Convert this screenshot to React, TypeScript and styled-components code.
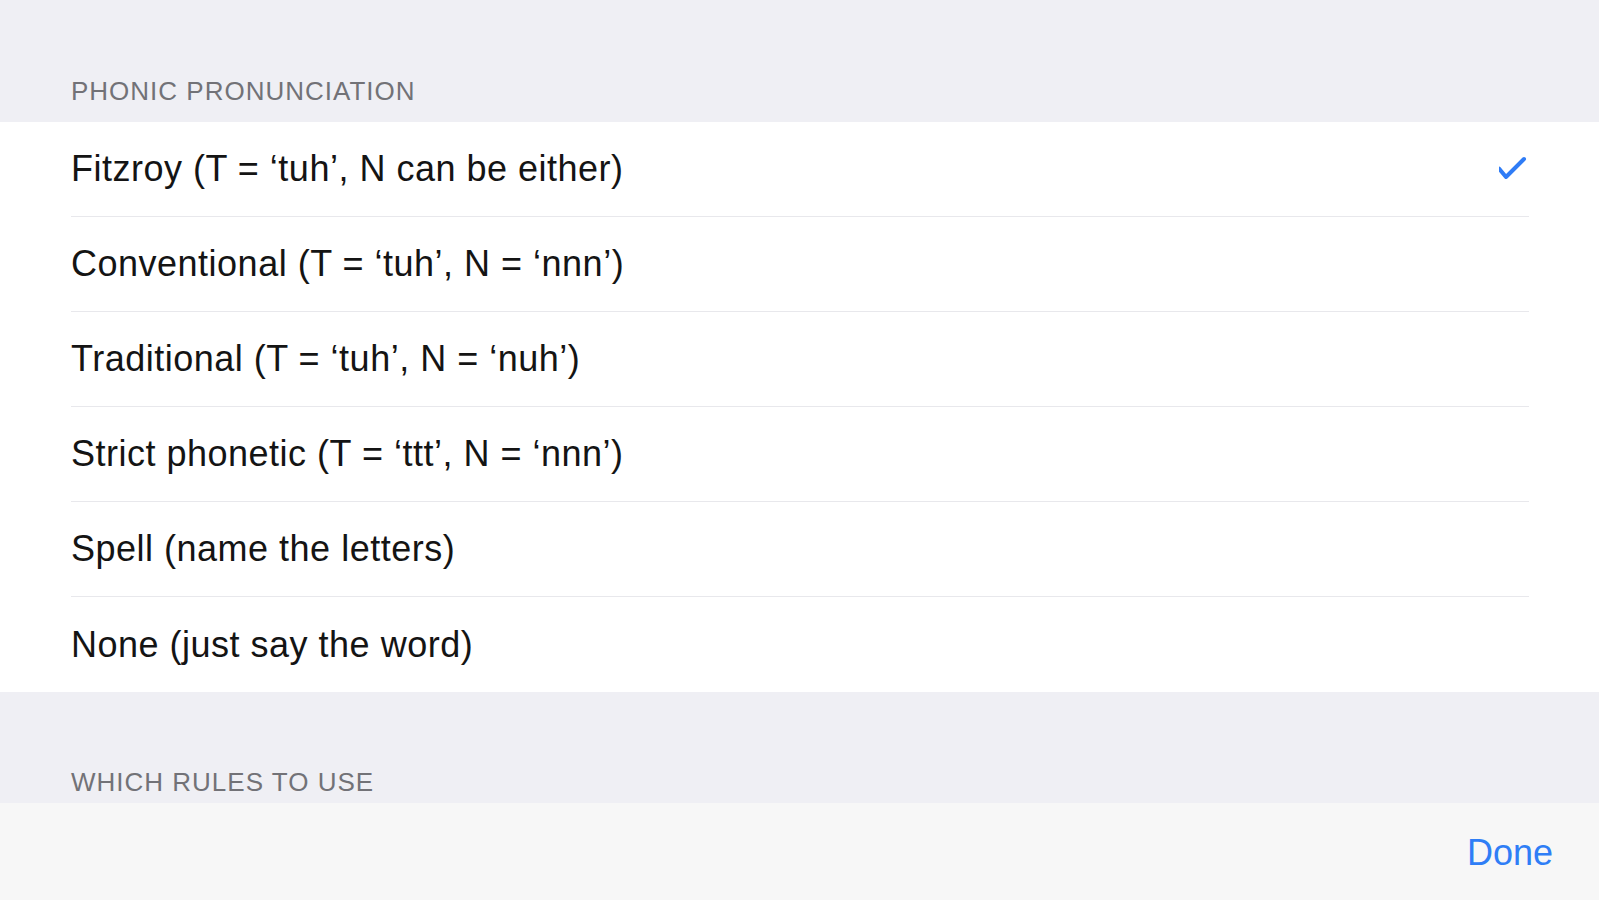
import React from "react";
import styled, { createGlobalStyle } from "styled-components";

const GlobalStyle = createGlobalStyle`
  html, body {
    margin: 0;
    padding: 0;
    background: #efeff4;
  }
  body {
    font-family: "Liberation Sans", Arial, sans-serif;
    -webkit-font-smoothing: antialiased;
  }
`;

const Screen = styled.div`
  width: 1599px;
  height: 900px;
  display: flex;
  flex-direction: column;
  background: #efeff4;
  overflow: hidden;
`;

const Content = styled.div`
  flex: 1;
  display: flex;
  flex-direction: column;
  overflow: hidden;
`;

const SectionHeader = styled.div<{ $top: number; $height: number }>`
  height: ${(p) => p.$height}px;
  padding: ${(p) => p.$top}px 71px 0;
  box-sizing: border-box;
  color: #727277;
  font-size: 26px;
  letter-spacing: 1px;
  text-transform: uppercase;
  line-height: 30px;
`;

const Group = styled.div`
  background: #ffffff;
  display: flex;
  flex-direction: column;
`;

const Row = styled.div<{ $last?: boolean }>`
  height: 95px;
  margin: 0 70px 0 71px;
  box-sizing: border-box;
  display: flex;
  align-items: center;
  justify-content: space-between;
  border-bottom: ${(p) => (p.$last ? "none" : "1px solid #e8e8ec")};
`;

const Label = styled.span`
  color: #141414;
  font-size: 36px;
  letter-spacing: 0.5px;
`;

const Toolbar = styled.div`
  height: 97px;
  flex-shrink: 0;
  background: #f7f7f7;
  display: flex;
  align-items: center;
  justify-content: flex-end;
  padding: 0 46px 0 0;
  box-sizing: border-box;
`;

const DoneButton = styled.button`
  border: none;
  background: none;
  padding: 0;
  margin-top: 2px;
  color: #2f7ef6;
  font-family: "Liberation Sans", Arial, sans-serif;
  font-size: 36px;
  cursor: pointer;
`;

const Check = () => (
  <svg width="30" height="26" viewBox="0 0 30 26" fill="none">
    <path
      d="M0 12.5 L7 21 L25 3"
      stroke="#2f7cf6"
      strokeWidth="4"
      strokeLinecap="round"
      strokeLinejoin="round"
    />
  </svg>
);

const options = [
  "Fitzroy (T = ‘tuh’, N can be either)",
  "Conventional (T = ‘tuh’, N = ‘nnn’)",
  "Traditional (T = ‘tuh’, N = ‘nuh’)",
  "Strict phonetic (T = ‘ttt’, N = ‘nnn’)",
  "Spell (name the letters)",
  "None (just say the word)",
];

export default function App() {
  const selected = 0;
  return (
    <>
      <GlobalStyle />
      <Screen>
        <Content>
          <SectionHeader $top={76} $height={122}>
            Phonic Pronunciation
          </SectionHeader>
          <Group>
            {options.map((o, i) => (
              <Row key={o} $last={i === options.length - 1}>
                <Label>{o}</Label>
                {i === selected && <Check />}
              </Row>
            ))}
          </Group>
          <SectionHeader $top={75} $height={111}>
            Which rules to use
          </SectionHeader>
        </Content>
        <Toolbar>
          <DoneButton>Done</DoneButton>
        </Toolbar>
      </Screen>
    </>
  );
}
